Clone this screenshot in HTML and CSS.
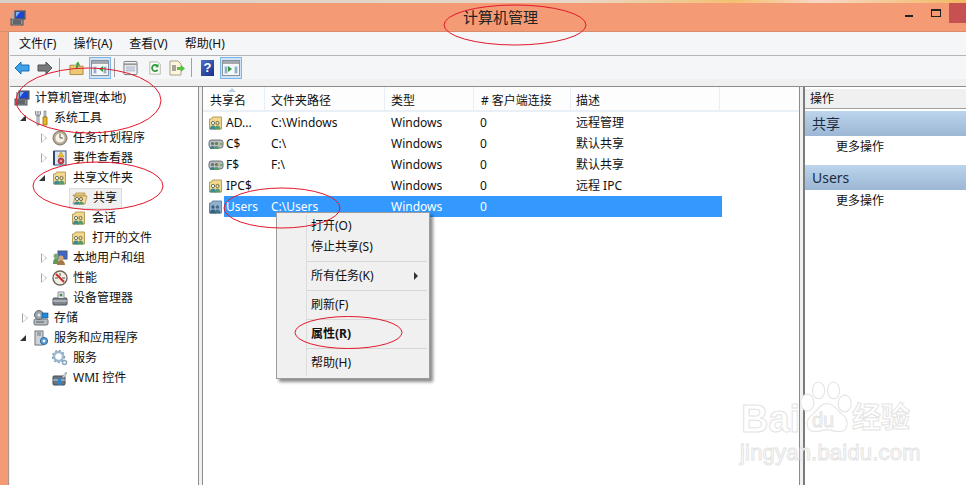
FILE: index.html
```html
<!DOCTYPE html>
<html lang="zh-CN">
<head>
<meta charset="utf-8">
<title>计算机管理</title>
<link rel="stylesheet" href="styles.css">
</head>
<body>
<svg class="defs" width="0" height="0">
  <defs>
    <symbol id="i-pc" viewBox="0 0 16 16">
      <rect x="5" y="1" width="10" height="8" fill="#5a6e8c" stroke="#39465c"/>
      <rect x="6" y="2" width="8" height="6" fill="#1c45d8"/>
      <path d="M6 2h4L6 7z" fill="#7fb4f0"/>
      <rect x="1" y="9" width="12" height="6" fill="#8f959c" stroke="#4e545c"/>
      <path d="M3 11h8M3 13h8" stroke="#30353b"/>
      <path d="M2 2h2v7H2z" fill="#a8adb3"/>
    </symbol>
    <symbol id="i-tools" viewBox="0 0 16 16">
      <path d="M5 1v4M3 1c-1 3 0 5 2 5s3-2 2-5" fill="none" stroke="#7a7f85" stroke-width="1.2"/>
      <path d="M4 6h2v9H4z" fill="#e6e8ea" stroke="#6f747a" stroke-width=".8"/>
      <path d="M11 1h2v6h-2z" fill="#c9ccd0" stroke="#6f747a" stroke-width=".6"/>
      <path d="M10 7h4v8h-4z" fill="#efb520" stroke="#8f6a10" stroke-width=".8"/>
    </symbol>
    <symbol id="i-clock" viewBox="0 0 16 16">
      <circle cx="8" cy="8" r="7" fill="#b9aa92" stroke="#7d7468"/>
      <circle cx="8" cy="8" r="5" fill="#f6f2e8" stroke="#a39a8a" stroke-width=".6"/>
      <path d="M8 4v4h3" fill="none" stroke="#5f5a52"/>
    </symbol>
    <symbol id="i-event" viewBox="0 0 16 16">
      <rect x="2" y="1" width="12" height="14" fill="#dfe5ee" stroke="#3d5378"/>
      <path d="M2 1v14" stroke="#2f4670" stroke-width="2"/>
      <path d="M9 2l3 5H6z" fill="#efc020" stroke="#a88310" stroke-width=".5"/>
      <circle cx="9" cy="11" r="3" fill="#c9444a" stroke="#7c2327" stroke-width=".6"/>
      <path d="M8 11h2" stroke="#fff"/>
    </symbol>
    <symbol id="i-share" viewBox="0 0 16 16">
      <path d="M1.500 4h2l1-2h9v12h-12z" fill="#f2d88e" stroke="#b09550" stroke-width=".9"/>
      <circle cx="5" cy="8" r="1.600" fill="#fff" stroke="#3c5a50" stroke-width=".8"/>
      <path d="M2 14.500c0-3 1-4 3-4s3 1 3 4z" fill="#3e8a90"/>
      <circle cx="9.500" cy="8" r="1.600" fill="#f0e0b0" stroke="#5c5430" stroke-width=".8"/>
      <path d="M7 14.500c0-3 1-4 2.500-4s3 1 3 4z" fill="#5b9a68"/>
    </symbol>
    <symbol id="i-share-dim" viewBox="0 0 16 16">
      <path d="M1.500 4h2l1-2h9v12h-12z" fill="#8fb0cf" stroke="#5f7f9f" stroke-width=".9"/>
      <circle cx="5" cy="8" r="1.700" fill="#3c607a"/>
      <path d="M2 14.500c0-3 1-4 3-4s3 1 3 4z" fill="#37607c"/>
      <circle cx="9.500" cy="8" r="1.700" fill="#4c6a80"/>
      <path d="M7 14.500c0-3 1-4 2.500-4s3 1 3 4z" fill="#41718a"/>
    </symbol>
    <symbol id="i-open" viewBox="0 0 16 16">
      <path d="M1 5h2l1-2h9v3H1z" fill="#e6c67a" stroke="#b09550" stroke-width=".8"/>
      <path d="M1 14l2-8h12l-2 8z" fill="#f4dc98" stroke="#b09550" stroke-width=".8"/>
      <circle cx="5" cy="9" r="1.600" fill="#fff" stroke="#3c5a50" stroke-width=".8"/>
      <path d="M2 14.500c0-2 1-3 3-3s3 1 3 3z" fill="#3e8a90"/>
      <circle cx="9" cy="9" r="1.600" fill="#f0e0b0" stroke="#5c5430" stroke-width=".8"/>
      <path d="M7 14.500c0-2 1-3 2-3s3 1 3 3z" fill="#5b9a68"/>
    </symbol>
    <symbol id="i-disk" viewBox="0 0 16 16">
      <rect x="1" y="4" width="14" height="8" rx="2.500" fill="#b8bcc0" stroke="#6c7075"/>
      <rect x="12" y="7" width="2" height="2" fill="#52c24a"/>
      <circle cx="4.500" cy="7.500" r="1.600" fill="#4f7c70"/>
      <path d="M2 13c0-2 1-3 2.500-3s2.500 1 2.500 3z" fill="#3e7e8c"/>
      <circle cx="8.500" cy="7.500" r="1.600" fill="#7d7448"/>
      <path d="M6 13c0-2 1-3 2.500-3s2.500 1 2.500 3z" fill="#5b9a68"/>
    </symbol>
    <symbol id="i-users" viewBox="0 0 16 16">
      <rect x="6" y="1" width="9" height="8" fill="#3e68c4" stroke="#4b5a78"/>
      <circle cx="4" cy="6" r="2.500" fill="#7fa878"/>
      <path d="M1 14c0-4 1-6 3-6s3 2 3 6z" fill="#5f9a58"/>
      <circle cx="9" cy="8" r="2.500" fill="#d8a878"/>
      <path d="M5 15c0-3 2-5 4-5s4 2 4 5z" fill="#a87848"/>
    </symbol>
    <symbol id="i-perf" viewBox="0 0 16 16">
      <circle cx="8" cy="8" r="7" fill="#f2eee4" stroke="#6f675c" stroke-width="1.400"/>
      <path d="M4 4l8 8" stroke="#c8282c" stroke-width="2"/>
      <path d="M8 3v3M3 8h3M10 8h3" stroke="#555"/>
    </symbol>
    <symbol id="i-dev" viewBox="0 0 16 16">
      <rect x="1" y="8" width="14" height="7" rx="1" fill="#7f868e" stroke="#4a5058"/>
      <path d="M1 11h14" stroke="#d8dbde"/>
      <path d="M6 8V2h6v6" fill="#e6e8ea" stroke="#8a8f95"/>
      <circle cx="9" cy="5" r="1.500" fill="#4f8a5a"/>
    </symbol>
    <symbol id="i-store" viewBox="0 0 16 16">
      <rect x="1" y="9" width="14" height="6" rx="1.500" fill="#b6bbc0" stroke="#6b7076"/>
      <circle cx="6" cy="5" r="4.500" fill="#9aa3a8" stroke="#656c72"/>
      <circle cx="6" cy="5" r="1.500" fill="#e8eaec"/>
      <rect x="9" y="3" width="6" height="5" fill="#1f88d8" stroke="#14588f" stroke-width=".6"/>
      <path d="M3 12h8" stroke="#5b6066"/>
    </symbol>
    <symbol id="i-svc" viewBox="0 0 16 16">
      <rect x="2" y="1" width="8" height="14" fill="#cfd3d8" stroke="#71767c"/>
      <path d="M4 3h4M4 5h4" stroke="#6f747a"/>
      <circle cx="11" cy="11" r="3.600" fill="#5f9fd8" stroke="#2f6d9e"/>
      <circle cx="11" cy="11" r="1.300" fill="#fff"/>
    </symbol>
    <symbol id="i-gears" viewBox="0 0 16 16">
      <circle cx="6.500" cy="6.500" r="4.500" fill="none" stroke="#9db8cf" stroke-width="2.400"/>
      <circle cx="6.500" cy="6.500" r="6" fill="none" stroke="#7f9cb6" stroke-width="1.300" stroke-dasharray="2 2"/>
      <circle cx="12.500" cy="12.500" r="2" fill="none" stroke="#8ba7c0" stroke-width="1.500"/>
    </symbol>
    <symbol id="i-wmi" viewBox="0 0 16 16">
      <rect x="1" y="6" width="12" height="9" rx="1" fill="#6d747b" stroke="#454b52"/>
      <path d="M1 10h12" stroke="#cfd3d7"/>
      <rect x="6" y="8" width="3" height="7" fill="#2f84c8"/>
      <path d="M10 7l4-5 1 1-3 5z" fill="#d5d8db" stroke="#7b8086" stroke-width=".5"/>
    </symbol>
    <symbol id="i-window" viewBox="0 0 18 18">
      <rect x=".5" y="1.500" width="17" height="15" fill="#f6f8fa" stroke="#8a9098"/>
      <rect x="1" y="2" width="16" height="3" fill="#a4a9af"/>
      <path d="M2 7h4v8H2z" fill="#cfe0f2"/>
      <path d="M12 7h4v8h-4z" fill="#cfe0f2"/>
      <path d="M3 9h2M3 11h2M3 13h2M13 9h2M13 11h2M13 13h2" stroke="#5a7898"/>
    </symbol>
  </defs>
</svg>

<div class="window">
  <div class="topstrip"></div>
  <header class="titlebar">
    <svg class="ico app-ico"><use href="#i-pc"/></svg>
    <span class="title">计算机管理</span>
    <div class="controls">
      <span class="btn-min"></span>
      <span class="btn-max"></span>
      <span class="btn-close"></span>
    </div>
  </header>

  <div class="client">
    <nav class="menubar">
      <span>文件(F)</span><span>操作(A)</span><span>查看(V)</span><span>帮助(H)</span>
    </nav>
    <div class="toolbar">
      <svg class="tool t-arrow" viewBox="0 0 16 14"><path d="M1 7l6-6v3h8v6H7v3z" fill="#3fa2e8" stroke="#1f6fb8"/></svg>
      <svg class="tool t-arrow t-fwd" viewBox="0 0 16 14"><path d="M15 7L9 1v3H1v6h8v3z" fill="#77797c" stroke="#515356"/></svg>
      <span class="tsep t-s1"></span>
      <svg class="tool t-up" viewBox="0 0 16 16"><path d="M1 5h5l1 1h8v9H1z" fill="#eec874" stroke="#a88a48"/><path d="M7 9l1-5-2 1 4-4 2 5-2-1-1 4z" fill="#3f9f3a"/></svg>
      <span class="tactive t-a1"><svg class="tool-in"><use href="#i-window"/></svg><i class="mark mark-left"></i></span>
      <span class="tsep t-s2"></span>
      <svg class="tool t-props" viewBox="0 0 16 16"><rect x="1" y="1" width="14" height="14" rx="1" fill="#f4f4f4" stroke="#777"/><path d="M1 4h14" stroke="#999" stroke-width="2"/><path d="M3 7h10M3 9h10M3 11h10" stroke="#9aa7c0"/></svg>
      <svg class="tool t-refresh" viewBox="0 0 16 16"><path d="M2 1h9l3 3v11H2z" fill="#fbfbf8" stroke="#b2b2a8"/><path d="M11 10a3.500 3.500 0 1 1 0-4" fill="none" stroke="#2f9a3a" stroke-width="2"/><path d="M12 3v4H8z" fill="#2f9a3a"/></svg>
      <svg class="tool t-export" viewBox="0 0 16 16"><path d="M1 1h8l3 3v11H1z" fill="#fbf6dc" stroke="#a8a28a"/><path d="M3 6h4M3 8h4M3 10h4" stroke="#555"/><path d="M8 7h4V5l4 3.500-4 3.500v-2H8z" fill="#55c044"/></svg>
      <span class="tsep t-s3"></span>
      <span class="t-help">?</span>
      <span class="tactive t-a2"><svg class="tool-in"><use href="#i-window"/></svg><i class="mark mark-right"></i></span>
    </div>

    <main class="panes">
      <aside class="tree">
        <div class="node l0"><svg class="ico"><use href="#i-pc"/></svg><span>计算机管理(本地)</span></div>
        <div class="node l1"><b class="arrow open"></b><svg class="ico"><use href="#i-tools"/></svg><span>系统工具</span></div>
        <div class="node l2"><b class="arrow"></b><svg class="ico"><use href="#i-clock"/></svg><span>任务计划程序</span></div>
        <div class="node l2"><b class="arrow"></b><svg class="ico"><use href="#i-event"/></svg><span>事件查看器</span></div>
        <div class="node l2"><b class="arrow open"></b><svg class="ico"><use href="#i-share"/></svg><span>共享文件夹</span></div>
        <div class="node l3"><b class="arrow none"></b><span class="picked"><svg class="ico"><use href="#i-open"/></svg><span>共享</span></span></div>
        <div class="node l3"><b class="arrow none"></b><svg class="ico"><use href="#i-share"/></svg><span>会话</span></div>
        <div class="node l3"><b class="arrow none"></b><svg class="ico"><use href="#i-share"/></svg><span>打开的文件</span></div>
        <div class="node l2"><b class="arrow"></b><svg class="ico"><use href="#i-users"/></svg><span>本地用户和组</span></div>
        <div class="node l2"><b class="arrow"></b><svg class="ico"><use href="#i-perf"/></svg><span>性能</span></div>
        <div class="node l2"><b class="arrow none"></b><svg class="ico"><use href="#i-dev"/></svg><span>设备管理器</span></div>
        <div class="node l1"><b class="arrow"></b><svg class="ico"><use href="#i-store"/></svg><span>存储</span></div>
        <div class="node l1"><b class="arrow open"></b><svg class="ico"><use href="#i-svc"/></svg><span>服务和应用程序</span></div>
        <div class="node l2"><b class="arrow none"></b><svg class="ico"><use href="#i-gears"/></svg><span>服务</span></div>
        <div class="node l2"><b class="arrow none"></b><svg class="ico"><use href="#i-wmi"/></svg><span>WMI 控件</span></div>
      </aside>

      <section class="list">
        <div class="row head">
          <span class="c1">共享名<i class="sort"></i></span><span class="c2">文件夹路径</span><span class="c3">类型</span><span class="c4"># 客户端连接</span><span class="c5">描述</span>
        </div>
        <div class="row"><span class="c1"><svg class="ico"><use href="#i-share"/></svg><em>AD...</em></span><span class="c2">C:\Windows</span><span class="c3">Windows</span><span class="c4">0</span><span class="c5">远程管理</span></div>
        <div class="row"><span class="c1"><svg class="ico"><use href="#i-disk"/></svg><em>C$</em></span><span class="c2">C:\</span><span class="c3">Windows</span><span class="c4">0</span><span class="c5">默认共享</span></div>
        <div class="row"><span class="c1"><svg class="ico"><use href="#i-disk"/></svg><em>F$</em></span><span class="c2">F:\</span><span class="c3">Windows</span><span class="c4">0</span><span class="c5">默认共享</span></div>
        <div class="row"><span class="c1"><svg class="ico"><use href="#i-share"/></svg><em>IPC$</em></span><span class="c2"></span><span class="c3">Windows</span><span class="c4">0</span><span class="c5">远程 IPC</span></div>
        <div class="row selected"><span class="c1"><svg class="ico"><use href="#i-share-dim"/></svg><em>Users</em></span><span class="c2">C:\Users</span><span class="c3">Windows</span><span class="c4">0</span><span class="c5"></span></div>
      </section>

      <aside class="actions">
        <div class="act-title">操作</div>
        <div class="act-head">共享</div>
        <div class="act-item">更多操作</div>
        <div class="act-head">Users</div>
        <div class="act-item">更多操作</div>
      </aside>
    </main>
  </div>

  <ul class="context">
    <li>打开(O)</li>
    <li>停止共享(S)</li>
    <li class="sep"></li>
    <li class="has-sub">所有任务(K)<i class="sub"></i></li>
    <li class="sep"></li>
    <li>刷新(F)</li>
    <li class="sep"></li>
    <li class="strong">属性(R)</li>
    <li class="sep"></li>
    <li>帮助(H)</li>
  </ul>

  <div class="watermark">
    <svg class="paw" viewBox="0 0 60 62">
      <g fill="#fff" stroke="#e4e4e4" stroke-width="1.200">
        <ellipse cx="9" cy="23" rx="7" ry="9"/>
        <ellipse cx="21" cy="10" rx="6.500" ry="9"/>
        <ellipse cx="37" cy="10" rx="6.500" ry="9"/>
        <ellipse cx="49" cy="24" rx="7" ry="9"/>
        <path d="M30 24c-8 0-10 8-17 13-7 6-5 16 3 17 6 1 9-2 14-2s9 3 15 2c7-1 9-11 3-17-7-5-10-13-18-13z"/>
      </g>
    </svg>
    <span class="wm-bai">Bai</span>
    <span class="wm-du">du</span>
    <span class="wm-jy">经验</span>
    <span class="wm-url">jingyan.baidu.com</span>
  </div>

  <svg class="marks" viewBox="0 0 966 485">
    <g fill="none" stroke="#e2182c" stroke-width="1">
      <ellipse cx="515" cy="25" rx="71" ry="20"/>
      <ellipse cx="88.500" cy="100.500" rx="72.500" ry="32.500"/>
      <ellipse cx="98" cy="186" rx="65" ry="24"/>
      <ellipse cx="282" cy="208" rx="58" ry="20"/>
      <ellipse cx="348.500" cy="332.500" rx="53.500" ry="16"/>
    </g>
  </svg>
</div>
</body>
</html>
```

FILE: styles.css
```css
* { box-sizing: border-box; }

html, body {
  margin: 0;
  padding: 0;
  overflow: hidden;
}

body {
  font-family: "Noto Sans", "Noto Sans CJK SC", sans-serif;
  font-size: 12px;
  line-height: 1;
  color: #111;
}

.defs { position: absolute; }

.window {
  position: relative;
  width: 966px;
  height: 485px;
  overflow: hidden;
  display: flex;
  flex-direction: column;
  background: #f49a74;
}

.topstrip {
  height: 3px;
  flex: none;
  background: linear-gradient(90deg, #d8cfc8 0, #e8d8c8 60%, #f5c070 76%, #f8d8c8 85%, #f2b860 100%);
}

.titlebar {
  height: 29px;
  flex: none;
  display: flex;
  align-items: flex-start;
  border-bottom: 1px solid #d98c6c;
}

.ico {
  width: 16px;
  height: 16px;
  flex: none;
  display: block;
}

.app-ico {
  margin: 7px 0 0 10px;
}

.title {
  margin: 5px 0 0 437px;
  font-size: 15px;
  line-height: 18px;
  color: #222;
}

.controls {
  margin-left: auto;
  display: flex;
  align-items: flex-start;
}

.btn-min {
  width: 8px;
  height: 2px;
  margin-top: 12px;
  background: #222;
}

.btn-max {
  width: 10px;
  height: 8px;
  margin: 6px 0 0 18px;
  border: 1px solid #222;
  border-top-width: 2px;
}

.btn-close {
  width: 17px;
  height: 20px;
  margin-left: 8px;
  background: #c75050;
}

.client {
  flex: 1;
  min-height: 0;
  margin-left: 8px;
  padding-left: 1px;
  display: flex;
  flex-direction: column;
  background: #f0f0f0;
  border-left: 1px solid #a89a90;
}

.menubar {
  height: 24px;
  flex: none;
  display: flex;
  align-items: center;
  gap: 17px;
  padding: 1px 0 0 9px;
  background: #f5f6f7;
  border-bottom: 1px solid #b4b4b4;
}

.toolbar {
  height: 23px;
  flex: none;
  display: flex;
  align-items: center;
  padding-left: 4px;
  background: #f5f6f7;
}

.tool { flex: none; display: block; }

.t-arrow { width: 16px; height: 14px; }
.t-fwd { margin-left: 7px; }

.tsep {
  width: 1px;
  height: 19px;
  flex: none;
  background: #a0a0a0;
}

.t-s1 { margin-left: 6px; }
.t-up { width: 15px; height: 16px; margin-left: 9px; }

.tactive {
  position: relative;
  width: 22px;
  height: 22px;
  flex: none;
  display: flex;
  align-items: center;
  justify-content: center;
  background: #cce4f7;
  border: 1px solid #7fb4e6;
}

.t-a1 { margin-left: 5px; }
.t-s2 { margin-left: 3px; }
.t-props { width: 15px; height: 16px; margin-left: 8px; }
.t-refresh { width: 14px; height: 16px; margin-left: 10px; }
.t-export { width: 16px; height: 16px; margin-left: 7px; }
.t-s3 { margin-left: 6px; }

.t-help {
  width: 13px;
  height: 16px;
  flex: none;
  margin-left: 9px;
  text-align: center;
  font: bold 13px/16px "Liberation Sans", sans-serif;
  color: #fff;
  background: linear-gradient(135deg, #4a6fc8, #1c2f88);
}

.t-a2 { margin-left: 6px; }

.tool-in { width: 18px; height: 18px; display: block; }

.mark {
  position: absolute;
  top: 8px;
  width: 0;
  height: 0;
  border-top: 3px solid transparent;
  border-bottom: 3px solid transparent;
}

.mark-left { left: 9px; border-right: 4px solid #2f9a3a; }
.mark-right { left: 7px; border-left: 4px solid #2f9a3a; }

.panes {
  flex: 1;
  min-height: 0;
  margin-top: 7px;
  display: flex;
  border-top: 1px solid #8c8c8c;
}

.tree {
  width: 189px;
  flex: none;
  padding-top: 1px;
  background: #fff;
  border-right: 1px solid #8c8c8c;
}

.node {
  height: 20px;
  display: flex;
  align-items: center;
  gap: 5px;
  white-space: nowrap;
}

.node .arrow { margin-right: -5px; }

.l0 { padding-left: 4px; }
.l1 { padding-left: 8px; }
.l2 { padding-left: 27px; }
.l3 { padding-left: 46px; }

.arrow {
  position: relative;
  width: 15px;
  height: 12px;
  flex: none;
  display: block;
}

.arrow::before,
.arrow::after {
  content: "";
  position: absolute;
  top: 1px;
  border-top: 5px solid transparent;
  border-bottom: 5px solid transparent;
}

.arrow::before {
  left: 4px;
  border-left: 6px solid #a6a6a6;
}

.arrow::after {
  left: 5px;
  top: 2px;
  border-top-width: 4px;
  border-bottom-width: 4px;
  border-left: 4px solid #fff;
}

.arrow.open::before {
  left: 2px;
  top: 3px;
  border: 0;
  border-bottom: 6px solid #333;
  border-left: 6px solid transparent;
}

.arrow.open::after,
.arrow.none::before,
.arrow.none::after { display: none; }

.picked {
  display: flex;
  align-items: center;
  gap: 5px;
  height: 21px;
  padding: 0 4px 0 2px;
  margin-left: -2px;
  background: #f0f0f0;
  border: 1px solid #dcdcdc;
}

.list {
  flex: 1;
  min-width: 0;
  margin-left: 3px;
  background: #fff;
  border-left: 1px solid #8c8c8c;
  border-right: 1px solid #8c8c8c;
}

.row {
  display: flex;
  height: 21px;
  width: 519px;
  align-items: center;
  white-space: nowrap;
}

.row > span {
  display: flex;
  align-items: center;
  height: 100%;
  flex: none;
}

.row em { font-style: normal; margin-left: 2px; }

.c1 { width: 62px; padding-left: 5px; }
.c2 { width: 120px; padding-left: 6px; }
.c3 { width: 89px; padding-left: 6px; }
.c4 { width: 97px; padding-left: 6px; }
.c5 { width: 149px; padding-left: 5px; }

.head {
  height: 25px;
  width: 100%;
  background: #fdfdfe;
  border-bottom: 2px solid #eaf0f8;
}

.head > span {
  position: relative;
  padding-top: 4px;
  border-right: 1px solid #e6eef8;
}

.head .c1 { padding-left: 7px; }
.head .c4 { padding-left: 7px; }

.sort {
  position: absolute;
  left: 25px;
  top: 1px;
  border-left: 4px solid transparent;
  border-right: 4px solid transparent;
  border-bottom: 4px solid #b8cfe4;
}

.selected {
  color: #fff;
  background: linear-gradient(90deg, transparent 21px, #3399ff 21px);
}

.actions {
  width: 163px;
  flex: none;
  margin-left: 3px;
  padding-top: 2px;
  background: #fff;
  border-left: 2px solid #7c7c7c;
}

.act-title {
  height: 20px;
  padding-left: 5px;
  display: flex;
  align-items: center;
  background: #f0f0f0;
  border-bottom: 1px solid #a0a0a0;
  margin-bottom: 2px;
}

.act-head {
  height: 25px;
  padding-left: 7px;
  display: flex;
  align-items: center;
  font-size: 14px;
  color: #1b2a40;
  background: linear-gradient(#bcd4ec, #9cb7d4);
}

.act-item {
  height: 29px;
  padding: 5px 0 0 31px;
  display: flex;
  align-items: flex-start;
}

.context {
  position: absolute;
  left: 276px;
  top: 212px;
  width: 154px;
  margin: 0;
  padding: 2px 0 5px;
  list-style: none;
  background: #f0f0f0;
  border: 1px solid #9c9c9c;
  box-shadow: 3px 3px 3px rgba(0, 0, 0, .45);
}

.context::before {
  content: "";
  position: absolute;
  left: 29px;
  top: 2px;
  bottom: 2px;
  width: 1px;
  background: #dcdcdc;
}

.context li {
  position: relative;
  height: 21px;
  padding-left: 34px;
  display: flex;
  align-items: center;
}

.context li.sep {
  height: 1px;
  padding: 0;
  margin: 4px 2px 3px 30px;
  background: #d7d7d7;
}

.context .strong { font-weight: 700; }

.sub {
  position: absolute;
  right: 11px;
  top: 7px;
  border-left: 4px solid #333;
  border-top: 4px solid transparent;
  border-bottom: 4px solid transparent;
}

.watermark {
  position: absolute;
  left: 740px;
  top: 380px;
  width: 180px;
  height: 90px;
  color: #fff;
  -webkit-text-stroke: 1px #e4e4e4;
  font-family: "Liberation Sans", "Noto Sans CJK SC", sans-serif;
}

.paw {
  position: absolute;
  left: 59px;
  top: 1px;
  width: 56px;
  height: 58px;
}

.wm-bai, .wm-du, .wm-jy, .wm-url {
  position: absolute;
  white-space: nowrap;
}

.wm-bai { left: 1px; top: 20px; font-size: 38px; font-weight: 700; }
.wm-du { left: 72px; top: 30px; font-size: 20px; }
.wm-jy { left: 112px; top: 24px; font-size: 29px; font-weight: 700; }
.wm-url { left: 0; top: 62px; font-size: 22px; letter-spacing: .2px; }

.marks {
  position: absolute;
  left: 0;
  top: 0;
  width: 966px;
  height: 485px;
  pointer-events: none;
}
```
